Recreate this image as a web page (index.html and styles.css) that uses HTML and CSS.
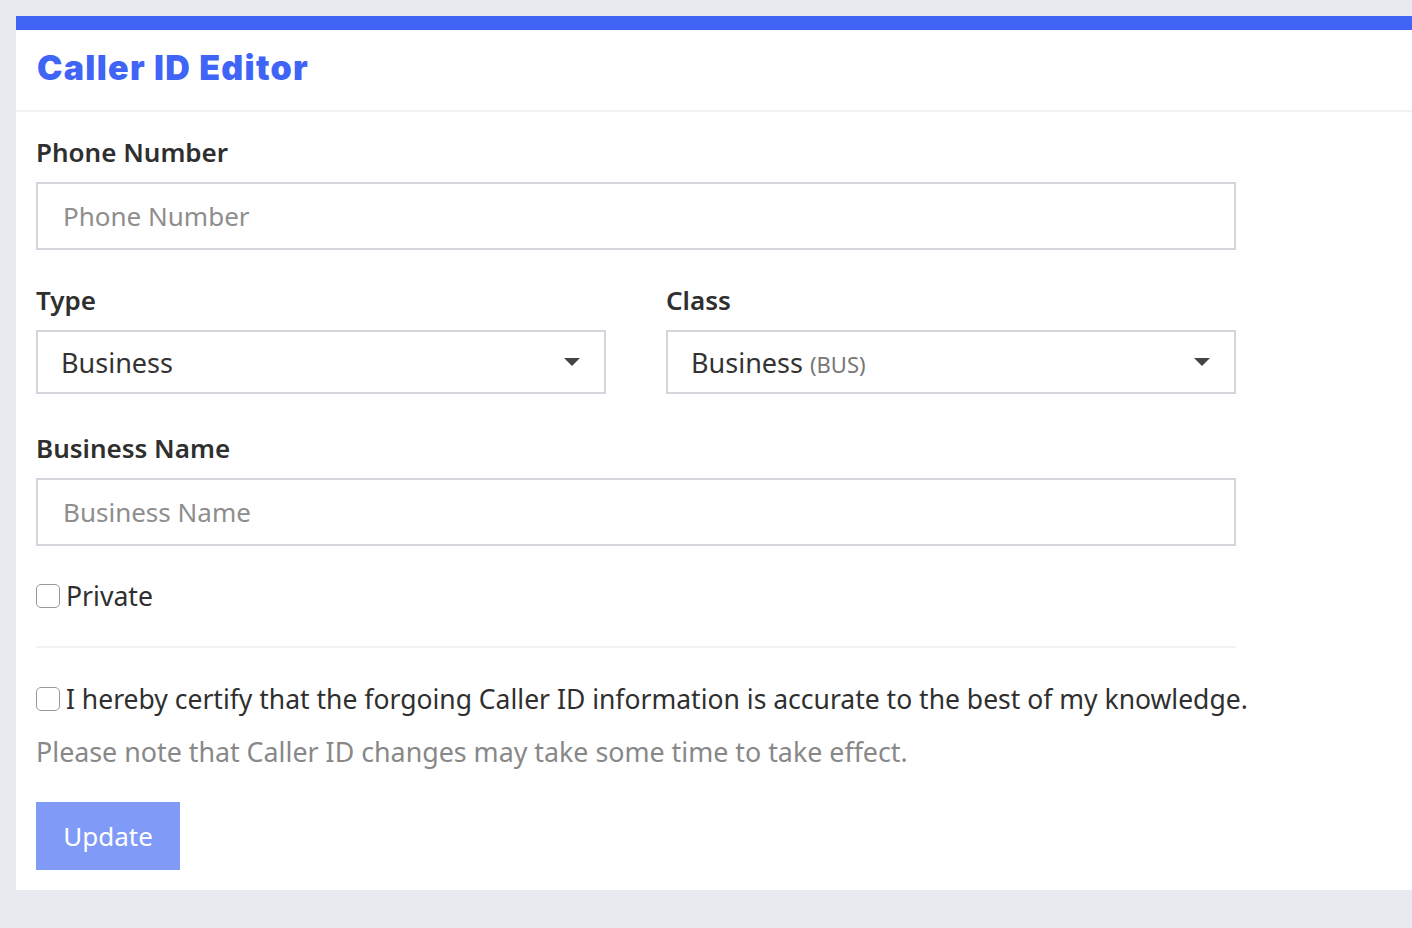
FILE: index.html
```html
<!DOCTYPE html>
<html lang="en">
<head>
    <meta charset="UTF-8">
    <meta name="viewport" content="width=device-width, initial-scale=1.0">
    <title>Caller ID Editor</title>
    <link rel="stylesheet" href="styles.css">
</head>
<body>
    <div class="card">
        <div class="card-header">
            <h1>Caller ID Editor</h1>
        </div>
        <form class="card-body" id="callerForm">
            <div class="field">
                <label for="phone">Phone Number</label>
                <input type="text" id="phone" placeholder="Phone Number">
            </div>
            <div class="row">
                <div class="field">
                    <label for="type">Type</label>
                    <div class="select">
                        <span>Business</span>
                        <span class="caret"></span>
                    </div>
                </div>
                <div class="field">
                    <label for="class">Class</label>
                    <div class="select">
                        <span>Business <small>(BUS)</small></span>
                        <span class="caret"></span>
                    </div>
                </div>
            </div>
            <div class="field">
                <label for="bizname">Business Name</label>
                <input type="text" id="bizname" placeholder="Business Name">
            </div>
            <label class="check">
                <input type="checkbox" id="private">
                <span>Private</span>
            </label>
            <hr>
            <label class="check certify">
                <input type="checkbox" id="certify">
                <span>I hereby certify that the forgoing Caller ID information is accurate to the best of my knowledge.</span>
            </label>
            <p class="note">Please note that Caller ID changes may take some time to take effect.</p>
            <button type="submit">Update</button>
        </form>
    </div>
</body>
</html>
```

FILE: styles.css
```css
body {
    margin: 0;
    background: #e9eaef;
    font-family: "Noto Sans", Arial, sans-serif;
    color: #333;
    padding: 16px 0 38px 16px;
}
.card {
    background: white;
    border-top: 14px solid #4065f6;
}
.card-header {
    height: 82px;
    display: flex;
    align-items: center;
    padding: 0 21px 6px;
    box-sizing: border-box;
    border-bottom: 2px solid #f1f1f3;
}
h1 {
    margin: 0;
    font-family: Inter, sans-serif;
    font-weight: 900;
    font-size: 34px;
    letter-spacing: 1.3px;
    color: #4065f6;
}
.card-body {
    padding: 22px 20px 20px 20px;
    width: 1200px;
}
.field {
    margin-bottom: 32px;
}
.row .field {
    margin-bottom: 36px;
}
label {
    display: block;
    font-size: 26px;
    font-weight: 600;
    margin-bottom: 12px;
    color: #2f2f2f;
}
input[type="text"] {
    display: block;
    box-sizing: border-box;
    width: 100%;
    height: 68px;
    padding: 0 25px;
    border: 2px solid #d4d5dc;
    font: inherit;
    font-size: 26px;
}
input::placeholder {
    color: #8e8e8e;
}
.row {
    display: grid;
    grid-template-columns: 1fr 1fr;
    gap: 60px;
}
.select {
    box-sizing: border-box;
    height: 64px;
    border: 2px solid #d4d5dc;
    padding: 0 24px 0 23px;
    display: flex;
    align-items: center;
    justify-content: space-between;
    font-size: 27px;
}
.select small {
    font-size: 22px;
    color: #777;
}
.caret {
    border-left: 8px solid transparent;
    border-right: 8px solid transparent;
    border-top: 8px solid #444;
}
.check {
    display: flex;
    align-items: center;
    gap: 6px;
    font-weight: 400;
    font-size: 26.6px;
    margin: 0;
}
.certify {
    font-size: 26.5px;
}
.certify span {
    white-space: nowrap;
}
.check input {
    appearance: none;
    width: 24px;
    height: 24px;
    margin: 0;
    border: 1.5px solid #999;
    border-radius: 5px;
    flex-shrink: 0;
}
hr {
    border: none;
    border-top: 2px solid #f1f1f3;
    margin: 32px 0 33px;
}
.note {
    font-size: 26.8px;
    color: #888;
    margin: 16px 0 32px;
}
button {
    background: #7f9af7;
    color: white;
    border: none;
    font: inherit;
    font-size: 26px;
    width: 144px;
    height: 68px;
}
```
